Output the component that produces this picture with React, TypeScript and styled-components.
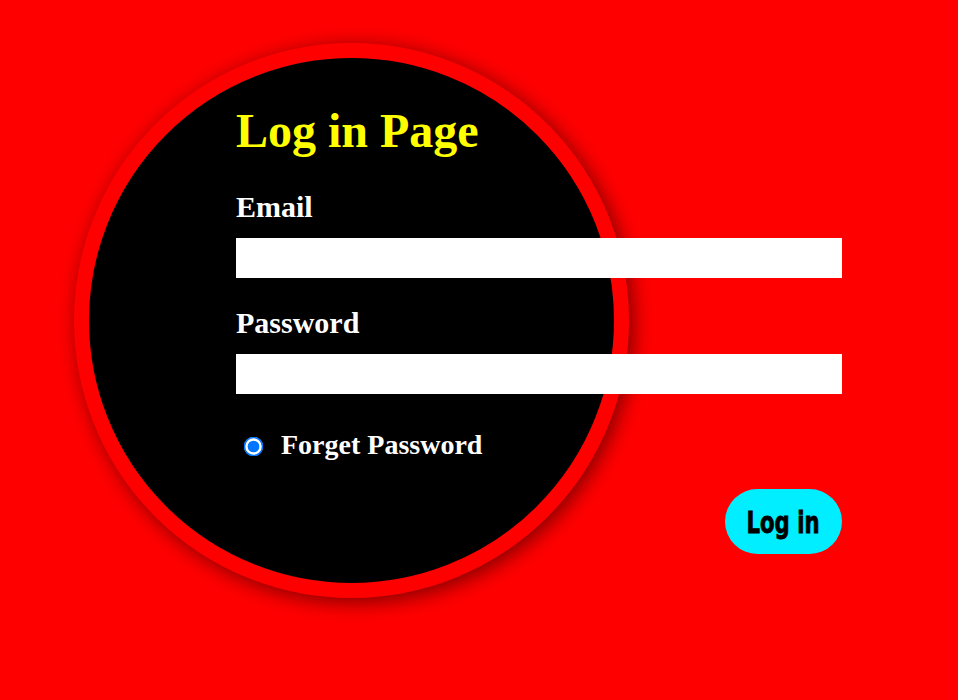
import React from "react";
import styled, { createGlobalStyle } from "styled-components";

const GlobalStyle = createGlobalStyle`
  html, body {
    margin: 0;
    padding: 0;
    background: #ff0000;
    font-family: "Liberation Serif", "Times New Roman", serif;
  }
  * { box-sizing: border-box; }
`;

const Page = styled.div`
  min-height: 100vh;
  padding: 43px 0 0 74px;
  background: #ff0000;
`;

const Circle = styled.div`
  width: 555px;
  height: 555px;
  border: 15px solid #ff0000;
  border-radius: 50%;
  background: #000;
  box-shadow: 4px 4px 20px rgba(0, 0, 0, 0.5);
`;

const Form = styled.form`
  width: 753px;
  padding: 46px 0 0 147px;
  display: flex;
  flex-direction: column;
`;

const Title = styled.h1`
  margin: 0;
  color: #ffff00;
  font-size: 48px;
  line-height: 53px;
  font-weight: bold;
`;

const Label = styled.label<{ $gap: number }>`
  display: block;
  margin-top: ${(p) => p.$gap}px;
  color: #fff;
  font-size: 30px;
  line-height: 33px;
  font-weight: bold;
`;

const Field = styled.input`
  display: block;
  margin: 15px 0 0 0;
  width: 606px;
  height: 40px;
  border: none;
  outline: none;
  background: #fff;
  padding: 0 8px;
  font-size: 18px;
`;

const CheckRow = styled.div`
  margin-top: 35px;
  display: flex;
  align-items: center;
  padding-left: 11px;
  gap: 21px;
`;

const Radio = styled.input`
  width: 13px;
  height: 13px;
  margin: 4px 0 0 0;
  transform: scale(1.5);
`;

const CheckText = styled.span`
  color: #fff;
  font-size: 28px;
  line-height: 31px;
  font-weight: bold;
`;

const ButtonRow = styled.div`
  width: 606px;
  margin-top: 29px;
  display: flex;
  justify-content: flex-end;
`;

const LoginButton = styled.button`
  width: 117px;
  height: 65px;
  border: none;
  border-radius: 33px;
  background: #00eeff;
  color: #000;
  font-family: Impact, "DejaVu Sans Condensed", "DejaVu Sans", sans-serif;
  font-size: 31px;
  font-weight: bold;
  cursor: pointer;
  padding: 0;
  display: flex;
  align-items: center;
  justify-content: center;
`;

const ButtonText = styled.span`
  display: inline-block;
  transform: scaleX(0.76);
  margin-top: 1px;
  white-space: nowrap;
  -webkit-text-stroke: 0.8px #000;
`;

export default function App() {
  return (
    <>
      <GlobalStyle />
      <Page>
        <Circle>
          <Form onSubmit={(e) => e.preventDefault()}>
            <Title>Log in Page</Title>
            <Label $gap={33} htmlFor="email">Email</Label>
            <Field id="email" type="email" />
            <Label $gap={28} htmlFor="password">Password</Label>
            <Field id="password" type="password" />
            <CheckRow>
              <Radio type="radio" defaultChecked id="forget" />
              <CheckText>Forget Password</CheckText>
            </CheckRow>
            <ButtonRow>
              <LoginButton type="submit">
                <ButtonText>Log in</ButtonText>
              </LoginButton>
            </ButtonRow>
          </Form>
        </Circle>
      </Page>
    </>
  );
}
